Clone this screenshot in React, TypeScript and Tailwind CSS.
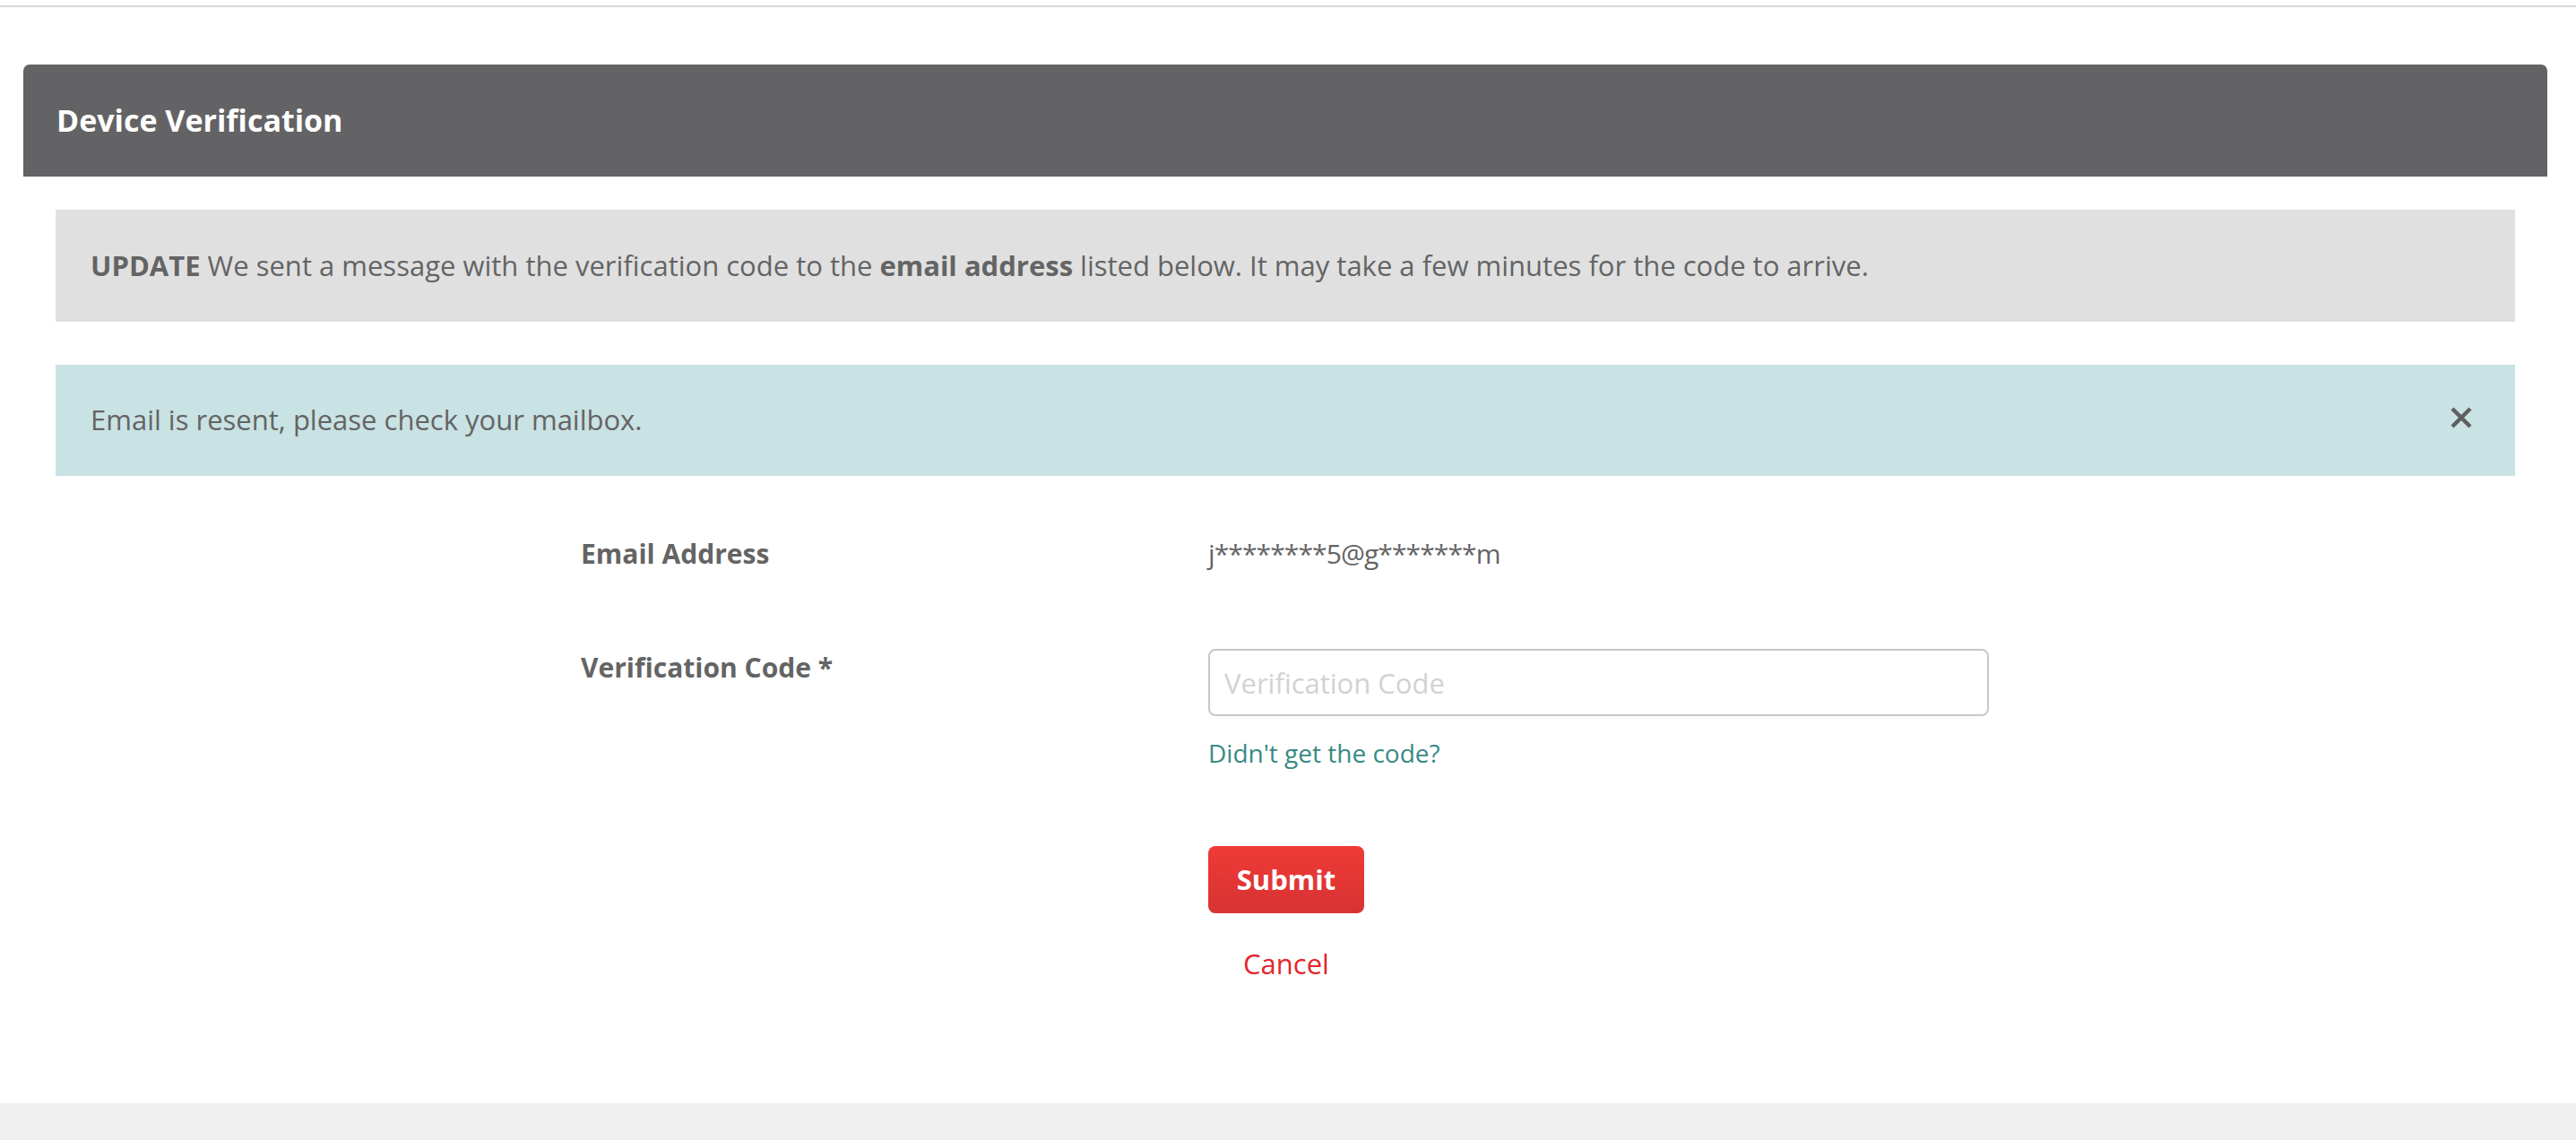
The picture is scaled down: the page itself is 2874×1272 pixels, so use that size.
import React from "react";

function CloseIcon() {
  return (
    <svg width="26" height="26" viewBox="0 0 26 26" fill="none">
      <path d="M3 3L23 23M23 3L3 23" stroke="#5f5f5f" strokeWidth="4.5" />
    </svg>
  );
}

export default function App() {
  return (
    <div className="w-[2874px] h-[1272px] bg-white font-['Open_Sans',sans-serif] text-[#646464] overflow-hidden">
      <div className="h-[1231px]">
        {/* top rule */}
        <div className="pt-[6px]">
          <div className="h-[2px] bg-[#d7d7d7]" />
        </div>

        <div className="ml-[26px] mt-[64px] w-[2816px]">
          {/* Panel header */}
          <div className="h-[125px] rounded-t-[7px] bg-[#636365] px-[37px] flex items-center">
            <h1 className="text-[34px] font-bold text-white leading-tight">Device Verification</h1>
          </div>

          <div className="px-[36px]">
            {/* Update notice */}
            <div className="mt-[37px] h-[125px] bg-[#e0e0e0] pl-[39px] flex items-center">
              <p className="text-[31px] leading-[36px] -mt-[2px]">
                <span className="font-bold">UPDATE</span> We sent a message with the verification code to the{" "}
                <span className="font-bold">email address</span> listed below. It may take a few minutes for the
                code to arrive.
              </p>
            </div>

            {/* Resent alert */}
            <div className="mt-[48px] h-[124px] bg-[#c9e2e3] pl-[39px] pr-[47px] flex items-center justify-between">
              <p className="text-[31px] leading-[36px] -mt-[2px]">Email is resent, please check your mailbox.</p>
              <button className="-mt-[6px]">
                <CloseIcon />
              </button>
            </div>

            {/* Form */}
            <div className="mx-auto w-[1572px] mt-[69px]">
              <div className="grid grid-cols-[700px_872px] items-start">
                <div className="text-[30px] leading-[36px] font-bold">Email Address</div>
                <div className="text-[30px] leading-[36px] tracking-[-0.9px]">j********5@g*******m</div>
              </div>

              <div className="grid grid-cols-[700px_872px] items-start mt-[88px]">
                <div className="text-[30px] leading-[36px] font-bold mt-[3px]">Verification Code *</div>
                <div className="flex flex-col items-start">
                  <input
                    type="text"
                    placeholder="Verification Code"
                    className="w-[871px] h-[75px] border-2 border-[#c8c8c8] rounded-[8px] px-[16px] text-[31px] placeholder:text-[#d2d2d2] outline-none"
                  />
                  <a href="#" className="mt-[24px] text-[28px] leading-[34px] text-[#388a83]">
                    Didn't get the code?
                  </a>
                  <div className="mt-[87px] w-[174px] flex flex-col items-center">
                    <button className="w-[174px] h-[75px] rounded-[8px] bg-gradient-to-b from-[#ef3a36] to-[#d73333] text-white text-[31px] font-bold">
                      Submit
                    </button>
                    <a href="#" className="mt-[37px] text-[31px] leading-[38px] text-[#e3262b]">
                      Cancel
                    </a>
                  </div>
                </div>
              </div>
            </div>
          </div>
        </div>
      </div>

      {/* footer strip */}
      <div className="h-[41px] bg-[#efefef]" />
    </div>
  );
}
